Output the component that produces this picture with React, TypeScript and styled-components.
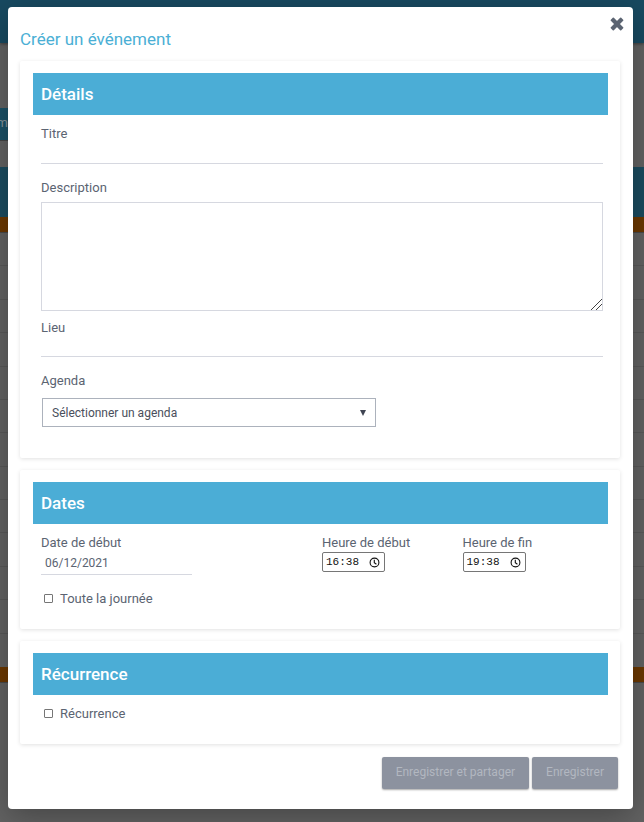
import React from "react";
import styled, { createGlobalStyle } from "styled-components";

const GlobalStyle = createGlobalStyle`
  *, *::before, *::after { box-sizing: border-box; }
  body {
    margin: 0;
    background: #5f5f5f;
    color: #5b6472;
    font-family: Roboto, Arial, sans-serif;
    font-size: 13px;
    line-height: 16px;
  }
  button, input, select, textarea { font: inherit; color: inherit; margin: 0; }
`;

const Screen = styled.div`
  display: grid;
  min-height: 100vh;
  overflow: hidden;
`;

const Backdrop = styled.div`
  grid-area: 1 / 1;
  min-width: 0;
  background: #636363;
`;

const TopBar = styled.div`
  height: 43px;
  background: #184a61;
  box-shadow: 0 1px 3px #00000066;
`;

const Toolbar = styled.div`
  display: flex;
  align-items: flex-end;
  height: 124px;
  padding-bottom: 26px;
`;

const WeekButton = styled.button`
  display: flex;
  justify-content: flex-end;
  width: 15px;
  height: 33px;
  padding: 7px 0 0;
  border: 0;
  border-bottom: 1px solid #444;
  background: #1b5268;
  color: #85929a;
`;

const DayHeader = styled.div`
  height: 50px;
  background: #1b4c60;
`;

const AllDayBar = styled.div`
  height: 16px;
  background: #6c3800;
  border-bottom: 1px solid #494949;
`;

const Hours = styled.div`
  display: grid;
  grid-template-rows: repeat(13, 1fr);
  height: 434px;
`;

const Hour = styled.div`
  border-bottom: 1px solid #595959;
  &:last-child { border-bottom: 0; }
`;

const ModalLayer = styled.div`
  grid-area: 1 / 1;
  z-index: 1;
  min-width: 0;
  padding: 7px 11px 13px 8px;
`;

const Modal = styled.form`
  position: relative;
  padding: 24px 13px 20px 12px;
  border-radius: 4px;
  background: #fff;
  box-shadow: 0 8px 32px #0000004d;
`;

const Title = styled.h1`
  margin: 0 0 14px;
  color: #4bafd5;
  font-size: 17px;
  font-weight: 400;
  line-height: 16px;
`;

const CloseButton = styled.button`
  position: absolute;
  top: 10px;
  right: 9px;
  display: flex;
  padding: 0;
  border: 0;
  background: none;
  cursor: pointer;
`;

const Panel = styled.section<{ $bottom: number }>`
  margin-bottom: 12px;
  padding: 12px 12px ${(p) => p.$bottom}px 13px;
  border-radius: 2px;
  box-shadow: 0 1px 4px #0000001f;
`;

const PanelTitle = styled.h2`
  margin: 0;
  padding: 0 8px;
  background: #4badd6;
  color: #fff;
  font-size: 17px;
  font-weight: 500;
  line-height: 42px;
`;

const PanelBody = styled.div`
  display: flex;
  flex-direction: column;
  padding: 11px 5px 0 8px;
`;

const Label = styled.label`
  display: block;
  line-height: 16px;
`;

const LineInput = styled.input<{ $height: number }>`
  display: block;
  width: 100%;
  height: ${(p) => p.$height}px;
  padding: 0 4px;
  border: 0;
  border-bottom: 1px solid #d6d8e0;
  background: none;
  font-size: 12px;
  outline: none;
`;

const Field = styled.div<{ $gap: number }>`
  margin-bottom: ${(p) => p.$gap}px;
`;

const TextArea = styled.textarea`
  display: block;
  width: 100%;
  height: 109px;
  margin-top: 6px;
  border: 1px solid #d6d8e0;
  background: none;
  resize: vertical;
  outline: none;
  &::-webkit-resizer {
    background: linear-gradient(
      135deg,
      transparent 61%, #444 62%, #444 65%, transparent 66%,
      transparent 78%, #444 79%, #444 82%, transparent 83%
    );
  }
`;

const SelectBox = styled.div`
  display: grid;
  align-items: center;
  width: 60%;
  padding: 9px 2px 0 1px;
`;

const Select = styled.select`
  grid-area: 1 / 1;
  width: 100%;
  height: 29px;
  padding: 0 28px 0 9px;
  appearance: none;
  border: 1px solid #acb2bc;
  border-radius: 0;
  background: #fff;
  color: #4a4f5c;
  font-size: 12px;
`;

const SelectArrow = styled.svg`
  grid-area: 1 / 1;
  justify-self: end;
  margin-right: 10px;
  pointer-events: none;
`;

const DateRow = styled.div`
  display: grid;
  grid-template-columns: 2fr 1fr 1fr;
`;

const DateField = styled.div`
  width: 151px;
`;

const TimeBox = styled.div`
  display: flex;
  align-items: center;
  width: 63px;
  height: 20px;
  margin-top: 1px;
  padding: 0 4px 0 3px;
  border: 1px solid #767676;
  border-radius: 2px;
  color: #111;
`;

const TimeInput = styled.input`
  flex: 1;
  min-width: 0;
  padding: 0;
  border: 0;
  background: none;
  font-family: "Liberation Mono", monospace;
  font-size: 11px;
  outline: none;
`;

const CheckRow = styled.label<{ $gap: number }>`
  display: flex;
  align-items: center;
  gap: 7px;
  width: fit-content;
  margin: ${(p) => p.$gap}px 0 0 3px;
`;

const Checkbox = styled.input.attrs({ type: "checkbox" })`
  && { margin-bottom: 2px; }
  width: 9px;
  height: 9px;
  appearance: none;
  border: 1px solid #767676;
  border-radius: 1px;
  background: #fff;
  &:checked { background: #4bafd5; }
`;

const Actions = styled.div`
  display: flex;
  justify-content: flex-end;
  gap: 3px;
  padding: 1px 2px 0 0;
`;

const SaveButton = styled.button`
  height: 32px;
  padding: 0 14px 3px;
  border: 0;
  border-radius: 2px;
  background: #8c929f;
  box-shadow: 0 1px 2px #00000059;
  color: #b2b7c0;
  font-size: 12px;
`;

function TimeField({ id, label, value }: { id: string; label: string; value: string }) {
  return (
    <div>
      <Label htmlFor={id}>{label}</Label>
      <TimeBox>
        <TimeInput id={id} defaultValue={value} inputMode="numeric" />
        <svg width="11" height="11" viewBox="0 0 11 11" fill="none" stroke="#111" strokeWidth="1.1">
          <circle cx="5.5" cy="5.5" r="4.4" />
          <path d="M5.3 2.7v3l2.1 1.5" />
        </svg>
      </TimeBox>
    </div>
  );
}

function Calendar() {
  return (
    <Backdrop aria-hidden="true">
      <TopBar />
      <Toolbar>
        <WeekButton type="button" tabIndex={-1}>ma</WeekButton>
      </Toolbar>
      <DayHeader />
      <AllDayBar />
      <Hours>
        {Array.from({ length: 13 }, (_, i) => <Hour key={i} />)}
      </Hours>
      <AllDayBar />
    </Backdrop>
  );
}

export default function App() {
  return (
    <Screen>
      <GlobalStyle />
      <Calendar />
      <ModalLayer>
        <Modal role="dialog" aria-labelledby="dialog-title" onSubmit={(e) => e.preventDefault()}>
          <Title id="dialog-title">Créer un événement</Title>
          <CloseButton type="button" aria-label="Fermer">
            <svg width="14" height="14" viewBox="0 0 14 14" fill="#5b6472" stroke="#5b6472" strokeWidth="1.6" strokeLinejoin="round">
              <path d="M3.3 1.4 7 5.1l3.7-3.7 1.9 1.9L8.9 7l3.7 3.7-1.9 1.9L7 8.9l-3.7 3.7-1.9-1.9L5.1 7 1.4 3.3z" />
            </svg>
          </CloseButton>

          <Panel $bottom={31}>
            <PanelTitle>Détails</PanelTitle>
            <PanelBody>
              <Field $gap={16}>
                <Label htmlFor="titre">Titre</Label>
                <LineInput id="titre" $height={22} />
              </Field>
              <Field $gap={9}>
                <Label htmlFor="description">Description</Label>
                <TextArea id="description" />
              </Field>
              <Field $gap={16}>
                <Label htmlFor="lieu">Lieu</Label>
                <LineInput id="lieu" $height={21} />
              </Field>
              <div>
                <Label htmlFor="agenda">Agenda</Label>
                <SelectBox>
                  <Select id="agenda">
                    <option>Sélectionner un agenda</option>
                  </Select>
                  <SelectArrow width="6" height="6" viewBox="0 0 6 6" fill="#3f4452">
                    <path d="M0 0h6L3 6z" />
                  </SelectArrow>
                </SelectBox>
              </div>
            </PanelBody>
          </Panel>

          <Panel $bottom={22}>
            <PanelTitle>Dates</PanelTitle>
            <PanelBody>
              <DateRow>
                <DateField>
                  <Label htmlFor="date">Date de début</Label>
                  <LineInput id="date" $height={24} defaultValue="06/12/2021" />
                </DateField>
                <TimeField id="debut" label="Heure de début" value="16:38" />
                <TimeField id="fin" label="Heure de fin" value="19:38" />
              </DateRow>
              <CheckRow $gap={16}>
                <Checkbox />
                Toute la journée
              </CheckRow>
            </PanelBody>
          </Panel>

          <Panel $bottom={22}>
            <PanelTitle>Récurrence</PanelTitle>
            <PanelBody>
              <CheckRow $gap={0}>
                <Checkbox />
                Récurrence
              </CheckRow>
            </PanelBody>
          </Panel>

          <Actions>
            <SaveButton type="submit" disabled>Enregistrer et partager</SaveButton>
            <SaveButton type="submit" disabled>Enregistrer</SaveButton>
          </Actions>
        </Modal>
      </ModalLayer>
    </Screen>
  );
}
